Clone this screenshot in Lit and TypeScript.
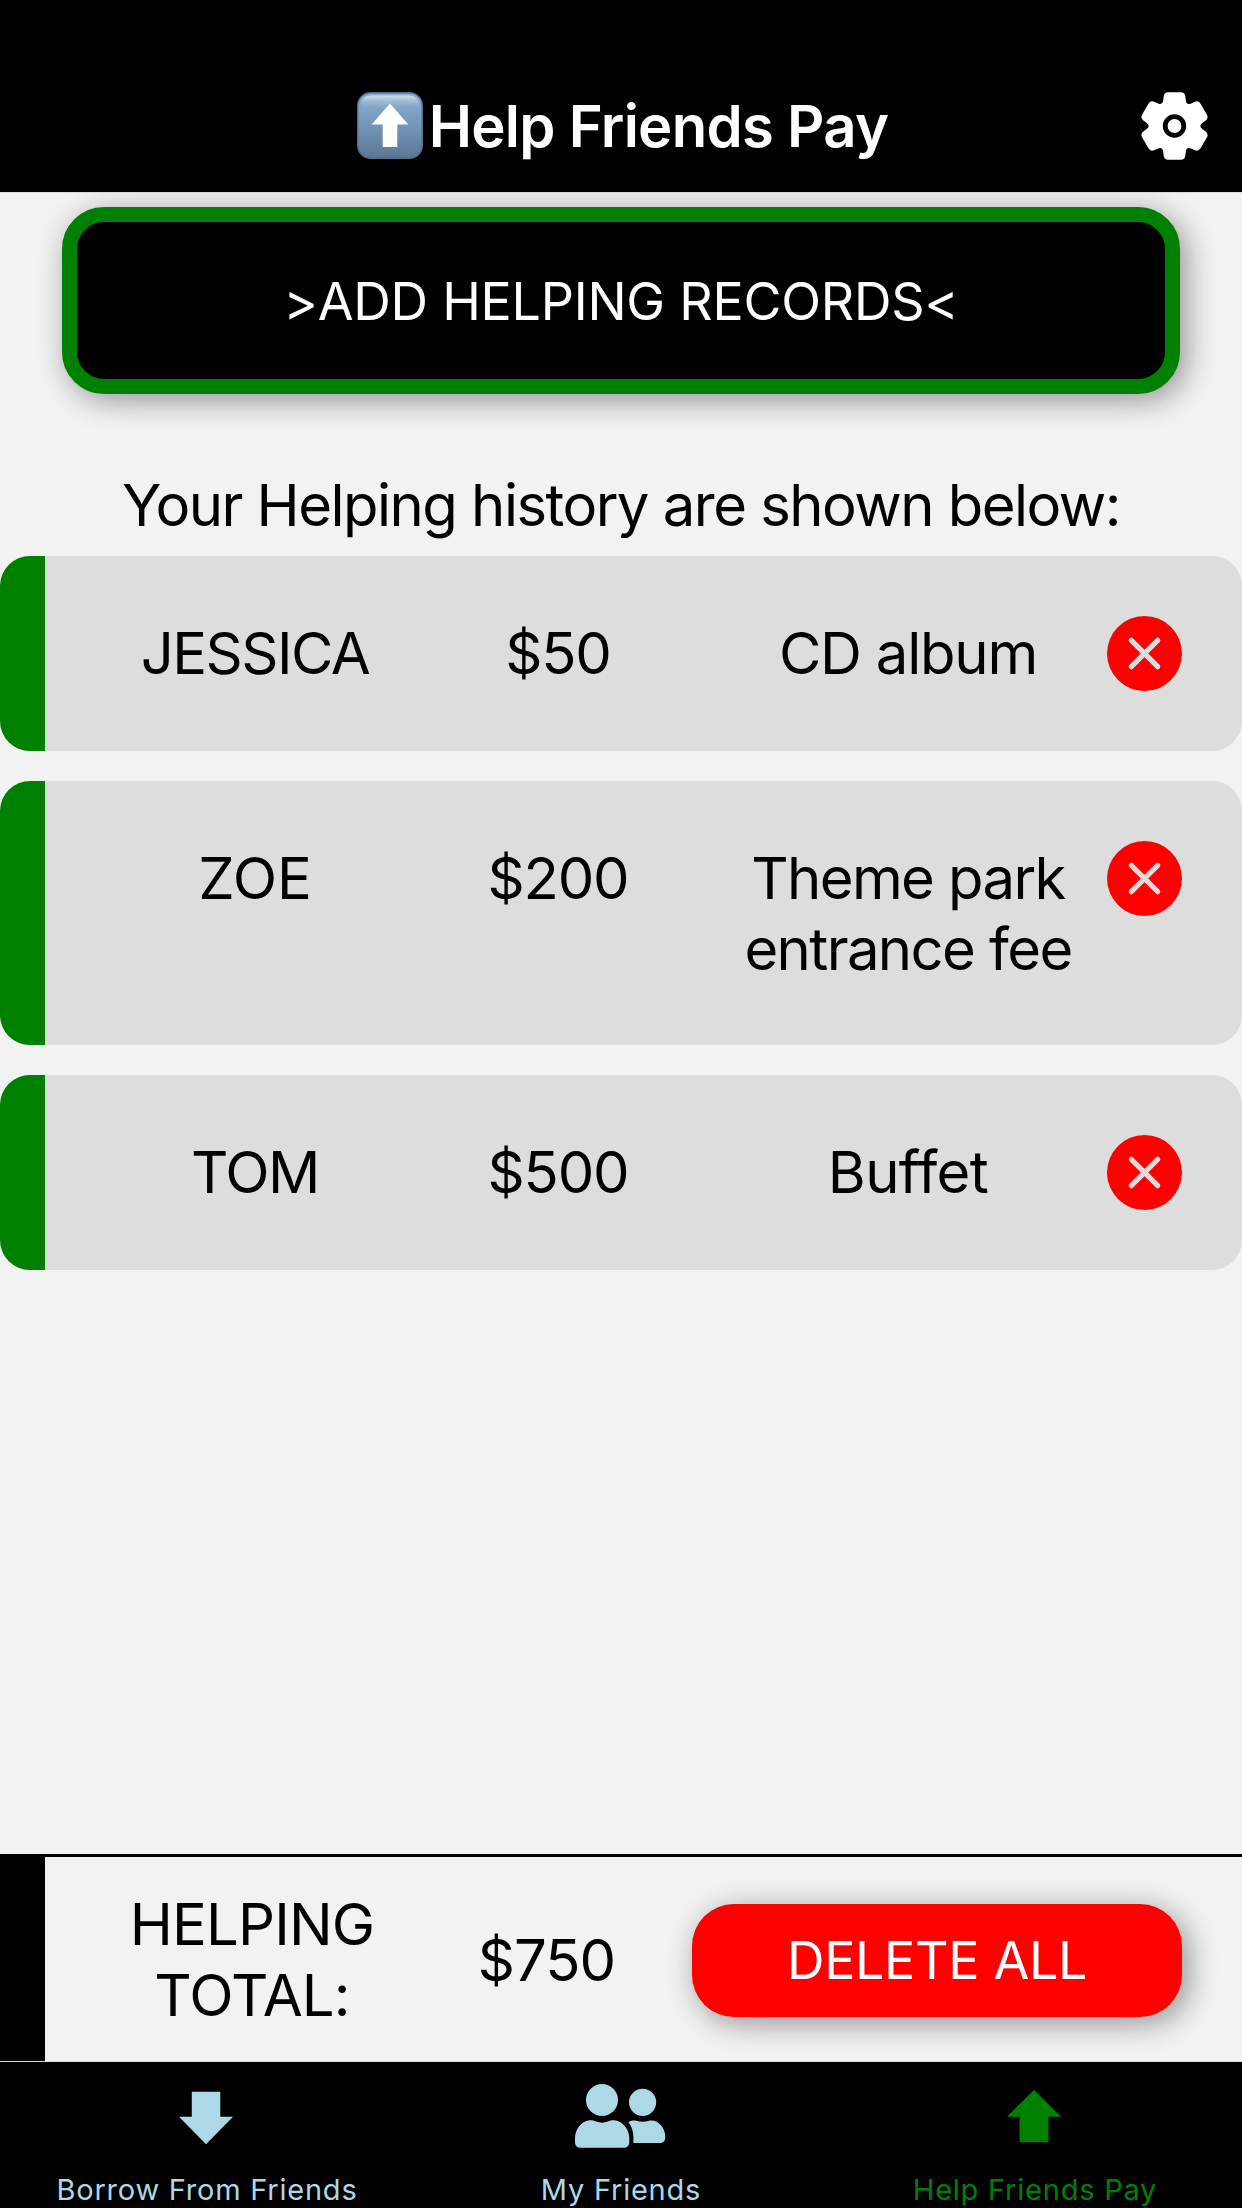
import { LitElement, html, css, svg } from "lit";
import { customElement, property, state } from "lit/decorators.js";

interface HelpRecord {
  name: string;
  amount: number;
  item: string;
  /** Letter spacing of the name and of the item, in pixels. */
  tracking: [number, number];
}

/** Outline of a six-toothed gear around the origin, with rounded corners. */
function gearPath(): string {
  const points: { x: number; y: number; r: number }[] = [];
  const corners = [
    { x: -10.3, y: -33.7, r: 4 },
    { x: 10.3, y: -33.7, r: 4 },
    { x: 12, y: -20.6, r: 5 },
  ];
  for (let tooth = 0; tooth < 6; tooth++) {
    const a = (tooth * Math.PI) / 3;
    for (const c of corners) {
      points.push({
        x: c.x * Math.cos(a) - c.y * Math.sin(a),
        y: c.x * Math.sin(a) + c.y * Math.cos(a),
        r: c.r,
      });
    }
  }
  const toward = (p: { x: number; y: number }, q: { x: number; y: number }, d: number) => {
    const len = Math.hypot(q.x - p.x, q.y - p.y);
    return `${(p.x + ((q.x - p.x) * d) / len).toFixed(2)} ${(p.y + ((q.y - p.y) * d) / len).toFixed(2)}`;
  };
  const n = points.length;
  const parts = points.map((p, i) => {
    const prev = points[(i + n - 1) % n];
    const next = points[(i + 1) % n];
    return `${i === 0 ? "M" : "L"}${toward(p, prev, p.r)}Q${p.x.toFixed(2)} ${p.y.toFixed(2)} ${toward(p, next, p.r)}`;
  });
  return parts.join("") + "Z";
}

const GEAR = gearPath();

@customElement("help-record")
export class HelpRecordCard extends LitElement {
  @property({ attribute: false }) record!: HelpRecord;

  static styles = css`
    :host {
      display: block;
    }
    .card {
      box-sizing: border-box;
      display: grid;
      grid-template-columns: 302px 302px 396px 75px;
      align-items: start;
      justify-content: space-between;
      padding: 60px 60px 60px 59px;
      border-left: 45px solid #008000;
      border-radius: 30px;
      background: #ddd;
      font-size: 58px;
      line-height: 71px;
      text-align: center;
      color: #000;
    }
    .cell {
      padding-top: 2px;
    }
    .amount {
      letter-spacing: -1.2px;
    }
    .remove {
      display: block;
      width: 75px;
      height: 75px;
    }
  `;

  render() {
    const { name, amount, item, tracking } = this.record;
    return html`
      <div class="card">
        <div class="cell" style="letter-spacing:${tracking[0]}px">${name}</div>
        <div class="cell amount">$${amount}</div>
        <div class="cell" style="letter-spacing:${tracking[1]}px">${item}</div>
        <svg class="remove" viewBox="0 0 75 75">
          <circle cx="37.5" cy="37.5" r="37.5" fill="#f00" />
          <path d="M24.3 24.3L50.7 50.7M50.7 24.3L24.3 50.7" stroke="#ddd" stroke-width="5.2" stroke-linecap="round" />
        </svg>
      </div>
    `;
  }
}

@customElement("app-root")
export class AppRoot extends LitElement {
  @state() private records: HelpRecord[] = [
    { name: "JESSICA", amount: 50, item: "CD album", tracking: [-1.5, -1.2] },
    { name: "ZOE", amount: 200, item: "Theme park entrance fee", tracking: [0, -1.6] },
    { name: "TOM", amount: 500, item: "Buffet", tracking: [-1.5, -0.6] },
  ];

  static styles = css`
    :host {
      display: flex;
      flex-direction: column;
      height: 2208px;
      background: #f2f2f2;
      font-family: Inter, "Liberation Sans", sans-serif;
      color: #000;
    }
    svg {
      display: block;
    }
    .header {
      position: relative;
      z-index: 1;
      box-sizing: border-box;
      height: 193px;
      padding: 59px 34px 0 37px;
      display: grid;
      grid-template-columns: 1fr auto 1fr;
      align-items: center;
      background: #000;
      border-bottom: 1px solid #d8d8d8;
      color: #fff;
    }
    .title {
      grid-column: 2;
      display: flex;
      align-items: center;
      gap: 6px;
      font-size: 58px;
      font-weight: 600;
      letter-spacing: -0.7px;
      line-height: 72px;
      white-space: nowrap;
    }
    .gear {
      justify-self: end;
    }
    .add {
      box-sizing: border-box;
      height: 187px;
      margin: 14px 62px 0;
      padding-top: 1px;
      display: flex;
      align-items: center;
      justify-content: center;
      border: 15px solid #008000;
      border-radius: 42px;
      background: #000;
      color: #fff;
      font-size: 52px;
      letter-spacing: -0.25px;
      box-shadow: 6px 6px 30px rgba(0, 0, 0, 0.4);
    }
    .subtitle {
      margin-top: 75px;
      font-size: 58px;
      line-height: 72px;
      letter-spacing: -1.52px;
      text-align: center;
      white-space: nowrap;
    }
    .list {
      flex: 1;
      margin-top: 15px;
      display: flex;
      flex-direction: column;
      gap: 30px;
    }
    .total {
      box-sizing: border-box;
      height: 207px;
      display: grid;
      grid-template-columns: 297px 290px 490px;
      align-items: center;
      justify-content: end;
      padding: 5px 60px 0 0;
      border-left: 45px solid #000;
      box-shadow: inset 0 3px #000;
      font-size: 58px;
      line-height: 71px;
      text-align: center;
    }
    .total-label {
      padding-right: 3px;
      letter-spacing: -0.85px;
    }
    .total-amount {
      padding-right: 1px;
      letter-spacing: -1px;
    }
    .delete {
      height: 113px;
      line-height: 113px;
      border-radius: 42px;
      background: #f00;
      color: #fff;
      font-size: 52px;
      letter-spacing: -0.35px;
      box-shadow: 6px 6px 30px rgba(0, 0, 0, 0.4);
    }
    .tabs {
      position: relative;
      z-index: 1;
      box-sizing: border-box;
      height: 147px;
      display: grid;
      grid-template-columns: repeat(3, 1fr);
      border-top: 1px solid #d8d8d8;
      background: #000;
      color: #add8e6;
    }
    .tab {
      display: flex;
      flex-direction: column;
      align-items: center;
      font-size: 29px;
      line-height: 36px;
      letter-spacing: 0.77px;
      white-space: nowrap;
      fill: currentColor;
    }
    .tab.active {
      color: #008000;
    }
    .tab-icon {
      height: 110px;
      margin-right: 2px;
    }
  `;

  private emoji() {
    return svg`
      <svg width="66" height="67" viewBox="0 0 66 67">
        <defs>
          <linearGradient id="face" x1="0" y1="0" x2="0" y2="1">
            <stop offset="0" stop-color="#8fb0cc" />
            <stop offset="0.3" stop-color="#7da1c6" />
            <stop offset="0.6" stop-color="#7090b2" />
            <stop offset="1" stop-color="#5b7690" />
          </linearGradient>
          <linearGradient id="gloss" x1="0" y1="0" x2="0" y2="1">
            <stop offset="0" stop-color="#cfdfe9" />
            <stop offset="1" stop-color="#7da1c6" stop-opacity="0" />
          </linearGradient>
        </defs>
        <rect x="0.7" y="0.7" width="64.6" height="65.6" rx="13" fill="url(#face)" stroke="#4f6f8f" stroke-width="1.4" />
        <path d="M4 19V14Q4 3.5 14 3.5H52Q62 3.5 62 14V19Z" fill="url(#gloss)" />
        <path d="M33 11.5L51.3 32.6H40.3V55H25.7V32.6H14.7Z" fill="#fff" />
      </svg>`;
  }

  private tabIcon(kind: string) {
    if (kind === "down") {
      return svg`<svg class="tab-icon" width="60" height="110" viewBox="0 0 60 110">
        <path d="M15.8 29.7H44.3V54.7H57L30 82.3L3 54.7H15.8Z" /></svg>`;
    }
    if (kind === "up") {
      return svg`<svg class="tab-icon" width="60" height="110" viewBox="0 0 60 110">
        <path d="M30 28L57 54.7H44.5V80.3H15.5V54.7H3Z" /></svg>`;
    }
    return svg`<svg class="tab-icon" width="92" height="110" viewBox="574 2062 92 110">
      <circle cx="602" cy="2100" r="16" />
      <circle cx="642.6" cy="2102.3" r="13.6" />
      <path d="M590 2120.3C592.500 2120.3 594 2120.8 596 2121.6C600 2123 604 2123 608 2121.6C610 2120.8 611.500 2120.3 614 2120.3C622.500 2120.8 629.3 2129 629.3 2138.500V2142C629.3 2145.800 627 2147.800 623.500 2147.800H580.800C577.300 2147.800 575 2145.800 575 2142V2138.500C575 2129 581.500 2120.8 590 2120.3Z" />
      <path d="M628.3 2122C630.500 2120.600 633.500 2120 636 2120.700C640.300 2122.100 644.900 2122.100 649.200 2120.700C658 2119.300 665.3 2127.500 665.3 2137C665.3 2140.800 663.500 2143 660 2143H633.400V2138C633.400 2132 632 2126.500 628.3 2122Z" />
    </svg>`;
  }

  render() {
    const total = this.records.reduce((sum, r) => sum + r.amount, 0);
    const tabs = [
      { icon: "down", label: "Borrow From Friends", active: false },
      { icon: "people", label: "My Friends", active: false },
      { icon: "up", label: "Help Friends Pay", active: true },
    ];
    return html`
      <div class="header">
        <div class="title">${this.emoji()}<span>Help Friends Pay</span></div>
        <svg class="gear" width="68" height="68" viewBox="-34.5 -34 68 68">
          <path d=${GEAR} fill="#fff" />
          <circle r="9.3" fill="#fff" stroke="#000" stroke-width="4.8" />
        </svg>
      </div>
      <div class="add">&gt;ADD HELPING RECORDS&lt;</div>
      <div class="subtitle">Your Helping history are shown below:</div>
      <div class="list">
        ${this.records.map((r) => html`<help-record .record=${r}></help-record>`)}
      </div>
      <div class="total">
        <div class="total-label">HELPING TOTAL:</div>
        <div class="total-amount">$${total}</div>
        <div class="delete">DELETE ALL</div>
      </div>
      <div class="tabs">
        ${tabs.map(
          (t) => html`<div class="tab ${t.active ? "active" : ""}">${this.tabIcon(t.icon)}<span>${t.label}</span></div>`,
        )}
      </div>
    `;
  }
}
